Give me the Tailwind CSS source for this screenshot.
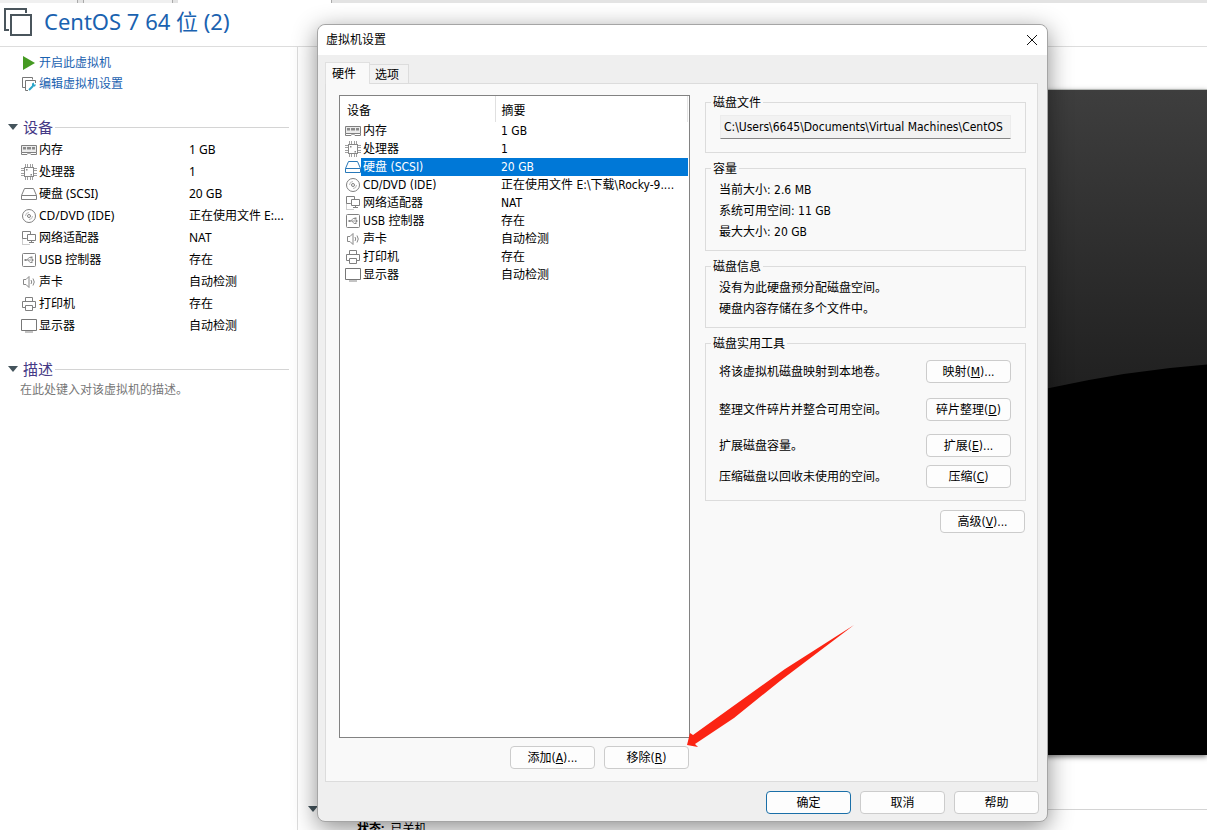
<!DOCTYPE html>
<html lang="zh-CN">
<head>
<meta charset="utf-8">
<title>虚拟机设置</title>
<script src="https://cdn.jsdelivr.net/npm/@tailwindcss/browser@4"></script>
</head>
<body class="relative flex h-screen min-h-[640px] flex-col overflow-hidden bg-white font-['Noto_Sans','Noto_Sans_CJK_SC',sans-serif] text-xs text-black">

<svg class="hidden" aria-hidden="true">
  <symbol id="i-mem" viewBox="0 0 16 16"><path d="M.5 3.500h15v7h-15z" fill="#ececec" stroke="#808080"/><path d="M2 5h3v2.500H2zM6 5h4v2.500H6zM11 5h3v2.500h-3z" fill="#8a8a8a"/><path d="M.5 10.500v2H6L7.500 11h1L10 12.500h5.500v-2" fill="none" stroke="#808080"/></symbol>
  <symbol id="i-cpu" viewBox="0 0 16 16"><rect x="3.500" y="3.500" width="9" height="9" fill="none" stroke="#888"/><path d="M4.500 0v3M6.500 0v3M9.500 0v3M11.500 0v3M4.500 13v3M6.500 13v3M9.500 13v3M11.500 13v3M0 4.500h3M0 6.500h3M0 9.500h3M0 11.500h3M13 4.500h3M13 6.500h3M13 9.500h3M13 11.500h3" stroke="#a0a0a0"/><path d="M5 5h1.500v1.500H5zM9.500 10h1.500v1.500H9.500z" fill="#888"/></symbol>
  <symbol id="i-disk" viewBox="0 0 16 16"><path d="M3.500 2.500h9L15.500 9.500v4H.5v-4zM.5 9.500h15" fill="none" stroke="currentColor"/></symbol>
  <symbol id="i-cd" viewBox="0 0 16 16"><circle cx="8" cy="8" r="6.500" fill="none" stroke="#808080"/><circle cx="8" cy="8" r="1.500" fill="none" stroke="#808080"/><path d="M4.500 8A3.500 3.500 0 0 1 8 4.500M11.500 8A3.500 3.500 0 0 1 8 11.500" fill="none" stroke="#bbb"/></symbol>
  <symbol id="i-net" viewBox="0 0 16 16"><path d="M5.500 8.500h-4v-7h8v3M1.500 8.500h4M6.500 4.500h8v6h-8zM8 12.500h5M10.500 10.500v2" fill="none" stroke="#808080"/><path d="M1.500 8.500v6h8" fill="none" stroke="#999" stroke-dasharray="1 1"/></symbol>
  <symbol id="i-usb" viewBox="0 0 16 16"><rect x="1.500" y="1.500" width="13" height="13" rx="1" fill="none" stroke="#808080"/><path d="M4 8h8M6 8l2-2.500h2M7 8l2 2.500h1.500" fill="none" stroke="#999"/><path d="M3.500 7h2v2h-2zM9.500 4.500h2v2h-2zM10 9.500h1.500V11H10zM11 6.500l2 1.500-2 1.500z" fill="#888"/></symbol>
  <symbol id="i-snd" viewBox="0 0 16 16"><path d="M2.500 5.500H5l3-3v11l-3-3H2.500zM10 6q1.500 2 0 4M12 4.500q2.500 3.500 0 7" fill="none" stroke="#888"/></symbol>
  <symbol id="i-prn" viewBox="0 0 16 16"><path d="M4.500 5.500v-4h7v4M4.500 11.500h-3v-6h13v6h-3M4.500 9.500h7v5h-7z" fill="none" stroke="#808080"/></symbol>
  <symbol id="i-dsp" viewBox="0 0 16 16"><path d="M.5 1.500h15v11H.5z" fill="none" stroke="#777"/><path d="M4 14h8" stroke="#888"/></symbol>
</svg>

<div class="flex h-[3px] shrink-0 gap-[5px] bg-[#e3e3e3]" aria-hidden="true">
  <div class="w-[78px] border-r border-[#aaa] bg-[#f0f0f0]"></div>
  <div class="w-[90px] border-x border-[#aaa] bg-[#f0f0f0]"></div>
  <div class="w-[154px] border-r border-[#aaa] bg-white"></div>
</div>

<header class="flex h-11 shrink-0 items-center gap-[11px] border-b border-[#ddd] pb-1.5 pl-1">
  <svg class="mt-0.5 size-[29px]" viewBox="0 0 29 29" fill="none" stroke="#4a555c" stroke-width="2"><path d="M5 22H1V1h21v4M7 7h20v20H7z"/></svg>
  <h1 class="text-[22px] text-[#1a62b0]">CentOS 7 64 位 (2)</h1>
</header>

<div class="flex min-h-0 flex-1">
  <aside class="w-[298px] shrink-0 border-r border-[#ddd] pt-[5px]">
    <nav class="flex flex-col pl-[22px] leading-[21px] text-[#1a62b0]">
      <a href="#" class="flex items-center gap-[3px]"><svg class="size-[14px]" viewBox="0 0 14 14"><path d="M1 0l12 7-12 7z" fill="#459a22"/></svg>开启此虚拟机</a>
      <a href="#" class="flex items-center gap-[3px]"><svg class="size-[14px]" viewBox="0 0 14 14" fill="none"><path d="M3 10.500H.5V.5h10v2M6 13.500H3.500V3.500h10V6" stroke="#777"/><path d="M7 13l4-4" stroke="#2aa5c9" stroke-width="2"/><path d="M10 9V6.500l2-1v2h2l-1 2h-2z" fill="#2aa5c9"/></svg>编辑虚拟机设置</a>
    </nav>

    <section class="pt-[22px]">
      <h2 class="mb-px flex h-[22px] items-center gap-[5px] pr-2 pl-2 text-[15px] text-[#453a86]"><svg class="h-[6px] w-[10px]" viewBox="0 0 10 6"><path d="M0 0h10L5 6z" fill="#44545c"/></svg>设备<span class="-ml-[3px] h-px flex-1 bg-[#d4d4d4]"></span></h2>
      <table class="ml-[21px] w-[268px] table-fixed">
        <colgroup><col class="w-[168px]"><col></colgroup>
        <tbody class="text-[#808080]">
          <tr class="h-[22px]"><td><span class="flex items-center gap-0.5"><svg class="size-4"><use href="#i-mem"/></svg><span class="text-black">内存</span></span></td><td class="truncate text-black">1 GB</td></tr>
          <tr class="h-[22px]"><td><span class="flex items-center gap-0.5"><svg class="size-4"><use href="#i-cpu"/></svg><span class="text-black">处理器</span></span></td><td class="truncate text-black">1</td></tr>
          <tr class="h-[22px]"><td><span class="flex items-center gap-0.5"><svg class="size-4"><use href="#i-disk"/></svg><span class="text-black">硬盘 (SCSI)</span></span></td><td class="truncate text-black">20 GB</td></tr>
          <tr class="h-[22px]"><td><span class="flex items-center gap-0.5"><svg class="size-4"><use href="#i-cd"/></svg><span class="text-black">CD/DVD (IDE)</span></span></td><td class="truncate text-black">正在使用文件 E:...</td></tr>
          <tr class="h-[22px]"><td><span class="flex items-center gap-0.5"><svg class="size-4"><use href="#i-net"/></svg><span class="text-black">网络适配器</span></span></td><td class="truncate text-black">NAT</td></tr>
          <tr class="h-[22px]"><td><span class="flex items-center gap-0.5"><svg class="size-4"><use href="#i-usb"/></svg><span class="text-black">USB 控制器</span></span></td><td class="truncate text-black">存在</td></tr>
          <tr class="h-[22px]"><td><span class="flex items-center gap-0.5"><svg class="size-4"><use href="#i-snd"/></svg><span class="text-black">声卡</span></span></td><td class="truncate text-black">自动检测</td></tr>
          <tr class="h-[22px]"><td><span class="flex items-center gap-0.5"><svg class="size-4"><use href="#i-prn"/></svg><span class="text-black">打印机</span></span></td><td class="truncate text-black">存在</td></tr>
          <tr class="h-[22px]"><td><span class="flex items-center gap-0.5"><svg class="size-4"><use href="#i-dsp"/></svg><span class="text-black">显示器</span></span></td><td class="truncate text-black">自动检测</td></tr>
        </tbody>
      </table>
    </section>

    <section class="pt-[21px]">
      <h2 class="flex h-[22px] items-center gap-[5px] pr-2 pl-2 text-[15px] text-[#453a86]"><svg class="h-[6px] w-[10px]" viewBox="0 0 10 6"><path d="M0 0h10L5 6z" fill="#44545c"/></svg>描述<span class="-ml-[3px] h-px flex-1 bg-[#d4d4d4]"></span></h2>
      <p class="pl-5 leading-5 text-[#777]">在此处键入对该虚拟机的描述。</p>
    </section>
  </aside>

  <main class="flex min-w-0 flex-1 flex-col pt-[42px]">
    <div class="ml-10 min-h-0 flex-1 border-t border-[#b5b8b5] bg-black shadow-[0_2px_5px_rgba(0,0,0,0.5)]">
      <svg class="size-full" viewBox="40 0 869 664" preserveAspectRatio="none">
        <defs><linearGradient id="sky" x1="0" y1="0" x2="0" y2="1"><stop offset="0" stop-color="#3e3e3e"/><stop offset="0.75" stop-color="#202020"/><stop offset="1" stop-color="#1c1c1c"/></linearGradient></defs>
        <path d="M0 0H909V274Q830 280 749 298L0 400z" fill="url(#sky)"/>
      </svg>
    </div>
    <div class="flex h-[75px] shrink-0 flex-col pt-[51px]">
      <div class="flex items-center pl-[10px]"><svg class="h-[6px] w-[10px]" viewBox="0 0 10 6"><path d="M0 0h10L5 6z" fill="#44545c"/></svg><span class="h-px flex-1 bg-[#d4d4d4]"></span></div>
      <p class="flex gap-1.5 pt-[9px] pl-[59px] whitespace-nowrap"><b>状态:</b><span>已关机</span></p>
    </div>
  </main>
</div>

<div role="dialog" aria-labelledby="dlg-title" class="absolute top-[24px] right-[159px] bottom-2 left-[317px] flex flex-col overflow-visible rounded-lg border border-[#a5a5a5] bg-[#efefef] font-['DejaVu_Sans_Condensed','Noto_Sans_CJK_SC',sans-serif] shadow-[0_6px_24px_rgba(0,0,0,0.45)]">
  <div class="flex h-[30px] shrink-0 items-center justify-between rounded-t-lg bg-white pr-[9px] pl-2">
    <h2 id="dlg-title">虚拟机设置</h2>
    <button type="button" aria-label="关闭" class="p-0"><svg class="size-3" viewBox="0 0 12 12" stroke="#111" fill="none"><path d="M1 1l10 10M11 1L1 11"/></svg></button>
  </div>

  <div role="tablist" class="flex shrink-0 items-end pt-[7px] pl-[7px]">
    <button type="button" role="tab" aria-selected="true" class="relative z-10 -mb-px h-[22px] w-[45px] border border-b-0 border-[#e0e0e0] bg-[#f9f9f9] pr-[7px]">硬件</button>
    <button type="button" role="tab" aria-selected="false" class="h-[19px] w-[39px] border border-b-0 border-l-0 border-[#dcdcdc] bg-[#f2f2f2] pt-px pr-1">选项</button>
  </div>

  <div role="tabpanel" class="mx-[7px] mr-[9px] flex min-h-0 flex-1 gap-[15px] border border-[#dcdcdc] bg-[#f9f9f9] pt-[11px] pr-[11px] pb-3 pl-[13px]">
    <div class="flex w-[351px] shrink-0 flex-col gap-2">
      <div class="min-h-0 flex-1 border border-[#828282] bg-white pr-px">
        <table class="w-full table-fixed">
          <colgroup><col class="w-[155px]"><col></colgroup>
          <thead><tr class="h-[26px] text-left"><th class="border-r border-[#e0e0e0] pt-[3px] pl-[7px] font-normal">设备</th><th class="border-r border-[#e5e5e5] pt-[3px] pl-[6px] font-normal">摘要</th></tr></thead>
          <tbody class="leading-[18px] text-[#808080]">
            <tr class="h-[18px]"><td class="p-0"><span class="flex h-[18px] items-center pl-[5px]"><svg class="size-4"><use href="#i-mem"/></svg><span class="flex-1 pl-0.5 text-black">内存</span></span></td><td class="truncate pl-[6px] text-black">1 GB</td></tr>
            <tr class="h-[18px]"><td class="p-0"><span class="flex h-[18px] items-center pl-[5px]"><svg class="size-4"><use href="#i-cpu"/></svg><span class="flex-1 pl-0.5 text-black">处理器</span></span></td><td class="truncate pl-[6px] text-black">1</td></tr>
            <tr class="h-[18px]" aria-selected="true"><td class="p-0"><span class="flex h-[18px] items-center pl-[5px]"><svg class="size-4 text-[#2878b8]"><use href="#i-disk"/></svg><span class="flex-1 bg-[#0078d7] pl-0.5 text-white">硬盘 (SCSI)</span></span></td><td class="truncate bg-[#0078d7] pl-[6px] text-white">20 GB</td></tr>
            <tr class="h-[18px]"><td class="p-0"><span class="flex h-[18px] items-center pl-[5px]"><svg class="size-4"><use href="#i-cd"/></svg><span class="flex-1 pl-0.5 text-black">CD/DVD (IDE)</span></span></td><td class="truncate pl-[6px] text-black">正在使用文件 E:\下载\Rocky-9....</td></tr>
            <tr class="h-[18px]"><td class="p-0"><span class="flex h-[18px] items-center pl-[5px]"><svg class="size-4"><use href="#i-net"/></svg><span class="flex-1 pl-0.5 text-black">网络适配器</span></span></td><td class="truncate pl-[6px] text-black">NAT</td></tr>
            <tr class="h-[18px]"><td class="p-0"><span class="flex h-[18px] items-center pl-[5px]"><svg class="size-4"><use href="#i-usb"/></svg><span class="flex-1 pl-0.5 text-black">USB 控制器</span></span></td><td class="truncate pl-[6px] text-black">存在</td></tr>
            <tr class="h-[18px]"><td class="p-0"><span class="flex h-[18px] items-center pl-[5px]"><svg class="size-4"><use href="#i-snd"/></svg><span class="flex-1 pl-0.5 text-black">声卡</span></span></td><td class="truncate pl-[6px] text-black">自动检测</td></tr>
            <tr class="h-[18px]"><td class="p-0"><span class="flex h-[18px] items-center pl-[5px]"><svg class="size-4"><use href="#i-prn"/></svg><span class="flex-1 pl-0.5 text-black">打印机</span></span></td><td class="truncate pl-[6px] text-black">存在</td></tr>
            <tr class="h-[18px]"><td class="p-0"><span class="flex h-[18px] items-center pl-[5px]"><svg class="size-4"><use href="#i-dsp"/></svg><span class="flex-1 pl-0.5 text-black">显示器</span></span></td><td class="truncate pl-[6px] text-black">自动检测</td></tr>
          </tbody>
        </table>
      </div>
      <div class="flex justify-end gap-[9px] pr-px">
        <button type="button" class="h-[23px] w-[85px] rounded border border-[#ccc] bg-[#fdfdfd] pt-px">添加(<u>A</u>)...</button>
        <button type="button" class="h-[23px] w-[85px] rounded border border-[#ccc] bg-[#fdfdfd] pt-px">移除(<u>R</u>)</button>
      </div>
    </div>

    <div class="-mt-[2px] flex min-w-0 flex-1 flex-col gap-[6px]">
      <fieldset class="min-w-0 border border-[#dcdcdc] px-[14px] pt-1 pb-[13px]">
        <legend class="-ml-[9px] px-0.5 pt-[3px] leading-[15px]">磁盘文件</legend>
        <input type="text" readonly aria-label="磁盘文件" value="C:\Users\6645\Documents\Virtual Machines\CentOS" class="block h-6 w-full border border-[#ececec] border-b-[#868686] bg-[#f2f2f2] px-[3px] outline-none">
      </fieldset>
      <fieldset class="min-w-0 border border-[#dcdcdc] px-[13px] pt-[3px] pb-[7px] leading-[21px]">
        <legend class="-ml-2 px-0.5 pt-[3px] leading-[15px]">容量</legend>
        <p>当前大小: 2.6 MB</p>
        <p>系统可用空间: 11 GB</p>
        <p>最大大小: 20 GB</p>
      </fieldset>
      <fieldset class="min-w-0 border border-[#dcdcdc] px-[13px] pt-[3px] pb-[7px] leading-[21px]">
        <legend class="-ml-2 px-0.5 pt-[3px] leading-[15px]">磁盘信息</legend>
        <p>没有为此硬盘预分配磁盘空间。</p>
        <p>硬盘内容存储在多个文件中。</p>
      </fieldset>
      <fieldset class="min-w-0 border border-[#dcdcdc] pt-2 pr-[14px] pb-3 pl-[13px]">
        <legend class="-ml-2 px-0.5 pt-[3px] leading-[15px]">磁盘实用工具</legend>
        <div class="flex items-center justify-between"><span>将该虚拟机磁盘映射到本地卷。</span><button type="button" class="h-[23px] w-[85px] rounded border border-[#ccc] bg-[#fdfdfd] pt-px">映射(<u>M</u>)...</button></div>
        <div class="mt-[15px] flex items-center justify-between"><span>整理文件碎片并整合可用空间。</span><button type="button" class="h-[23px] w-[85px] rounded border border-[#ccc] bg-[#fdfdfd] pt-px">碎片整理(<u>D</u>)</button></div>
        <div class="mt-[13px] flex items-center justify-between"><span>扩展磁盘容量。</span><button type="button" class="h-[23px] w-[85px] rounded border border-[#ccc] bg-[#fdfdfd] pt-px">扩展(<u>E</u>)...</button></div>
        <div class="mt-2 flex items-center justify-between"><span>压缩磁盘以回收未使用的空间。</span><button type="button" class="h-[23px] w-[85px] rounded border border-[#ccc] bg-[#fdfdfd] pt-px">压缩(<u>C</u>)</button></div>
      </fieldset>
      <button type="button" class="mt-[3px] mr-px h-[23px] w-[85px] self-end rounded border border-[#ccc] bg-[#fdfdfd] pt-px">高级(<u>V</u>)...</button>
    </div>
  </div>

  <div class="flex h-[39px] shrink-0 items-center justify-end gap-[9px] pt-px pr-2">
    <button type="button" class="h-[23px] w-[85px] rounded border border-[#1a6fa8] bg-[#fdfdfd] pt-px">确定</button>
    <button type="button" class="h-[23px] w-[85px] rounded border border-[#ccc] bg-[#fdfdfd] pt-px">取消</button>
    <button type="button" class="h-[23px] w-[85px] rounded border border-[#ccc] bg-[#fdfdfd] pt-px">帮助</button>
  </div>

  <svg class="pointer-events-none absolute bottom-[74px] left-[368px] h-[124px] w-[170px]" viewBox="0 0 170 124" aria-hidden="true"><path d="M168 2L99 46 7 112 4 110 1 122 12 124 9 121 48 95 94 58z" fill="#fb2413"/></svg>
</div>
</body>
</html>
